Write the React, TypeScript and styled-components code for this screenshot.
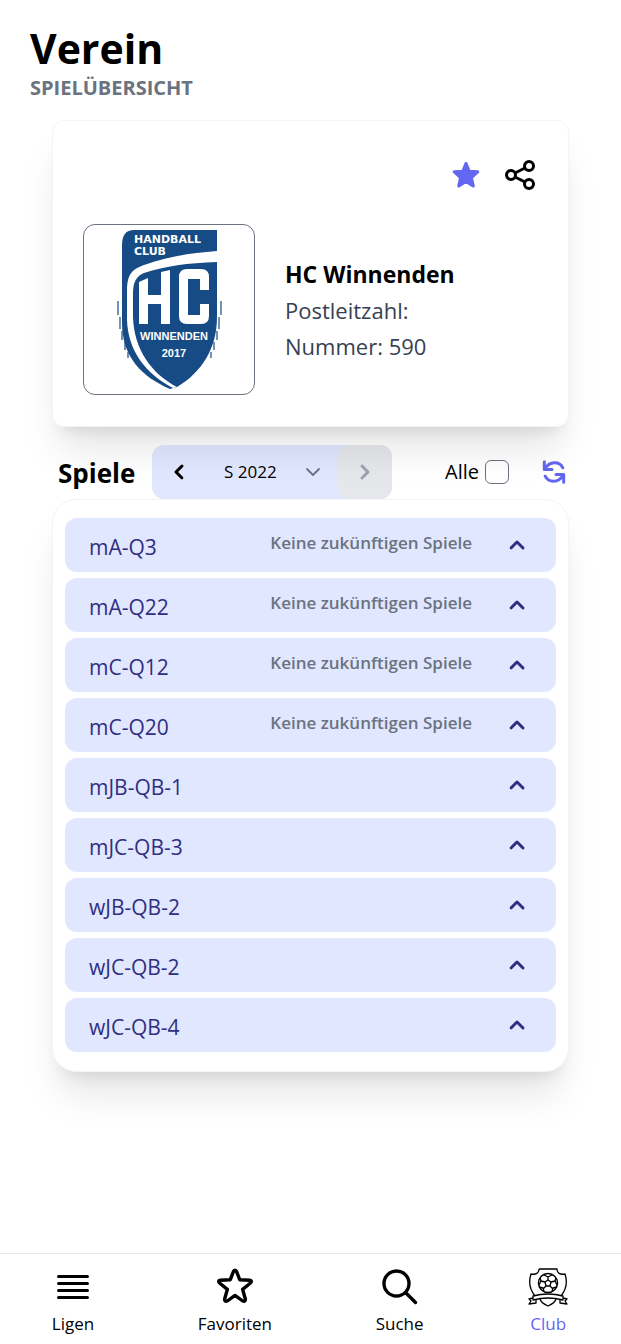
import React, { useState } from "react";
import styled, { createGlobalStyle } from "styled-components";

const Global = createGlobalStyle`
  *, *::before, *::after { box-sizing: border-box; }
  body {
    margin: 0;
    background: #fff;
    color: #000;
    font-family: "Segoe UI", "Open Sans", "Noto Sans", sans-serif;
    font-size: 20px;
    line-height: 30px;
  }
  button, select, input { font: inherit; color: inherit; }
`;

const Page = styled.div`
  display: flex;
  flex-direction: column;
  min-height: 100vh;
`;

const Header = styled.header`
  padding: 24px 30px 0;
`;

const Title = styled.h1`
  margin: 0;
  font-size: 41px;
  line-height: 48px;
  font-weight: 700;
`;

const Subtitle = styled.h2`
  margin: 0;
  font-size: 20px;
  line-height: 32px;
  font-weight: 700;
  text-transform: uppercase;
  color: #6b7280;
`;

const Main = styled.main`
  flex: 1;
  padding: 16px 52px 48px;
`;

const Card = styled.section`
  background: #fff;
  border: 1px solid #f3f4f6;
  box-shadow: 0 30px 38px -8px rgba(0, 0, 0, 0.1), 0 12px 15px -9px rgba(0, 0, 0, 0.1);
`;

const ClubCard = styled(Card)`
  position: relative;
  border-radius: 12px;
  padding: 36px 30px 31px;
`;

const CardActions = styled.div`
  display: flex;
  justify-content: flex-end;
  gap: 18px;
  margin-bottom: 31px;
`;

const IconButton = styled.button<{ $accent?: boolean; $width?: number }>`
  display: flex;
  align-items: center;
  justify-content: center;
  width: ${(p) => p.$width ?? 36}px;
  height: 36px;
  padding: 0;
  border: 0;
  background: none;
  color: ${(p) => (p.$accent ? "#6366f1" : "#000")};
`;

const ClubInfo = styled.div`
  display: flex;
  align-items: center;
  gap: 30px;
`;

const LogoFrame = styled.div`
  width: 172px;
  height: 171px;
  border: 1px solid #6b7280;
  border-radius: 12px;
  overflow: hidden;
`;

const ClubName = styled.h3`
  margin: 0;
  font-size: 23px;
  line-height: 36px;
  font-weight: 700;
`;

const ClubDetail = styled.p`
  margin: 0;
  font-size: 22px;
  line-height: 36px;
  color: #374151;
`;

const Toolbar = styled.div`
  display: flex;
  align-items: center;
  margin-top: 18px;
  padding-left: 6px;
`;

const ToolbarTitle = styled.h3`
  margin: 0;
  width: 94px;
  padding-top: 2px;
  font-size: 26px;
  line-height: 36px;
  font-weight: 700;
`;

const SeasonPicker = styled.div`
  display: flex;
  width: 240px;
  height: 54px;
  border-radius: 12px;
  background: #e0e7ff;
`;

const StepButton = styled.button`
  display: flex;
  align-items: center;
  justify-content: center;
  width: 54px;
  padding: 0;
  border: 0;
  border-radius: 12px;
  background: none;

  &:disabled {
    background: #e5e7eb;
    color: #9ca3af;
  }
`;

const SelectWrap = styled.label`
  display: flex;
  flex: 1;
  align-items: center;
  padding: 0 15px 0 18px;

  svg { pointer-events: none; flex: none; }
`;

const Select = styled.select`
  appearance: none;
  flex: 1;
  min-width: 0;
  padding: 0;
  border: 0;
  background: transparent;
  font-size: 17px;
  line-height: 30px;
`;

const AllToggle = styled.label`
  display: flex;
  align-items: center;
  gap: 6px;
  margin-left: auto;
  margin-right: 30px;
`;

const Checkbox = styled.input`
  appearance: none;
  width: 24px;
  height: 24px;
  margin: 0;
  border: 1px solid #6b7280;
  border-radius: 6px;
  background: #fff;

  &:checked { background: #6366f1; }
`;

const GroupCard = styled(Card)`
  border-radius: 24px;
  padding: 18px 12px 19px;
`;

const GroupList = styled.ul`
  display: flex;
  flex-direction: column;
  gap: 6px;
  margin: 0;
  padding: 0;
  list-style: none;
`;

const GroupRow = styled.button`
  display: flex;
  align-items: center;
  width: 100%;
  height: 54px;
  padding: 0 24px;
  border: 0;
  border-radius: 12px;
  background: #e0e7ff;
  color: #312e81;
  text-align: left;
`;

const GroupName = styled.span`
  flex: 1;
  padding-top: 4px;
  font-size: 21px;
  font-weight: 500;
`;

const GroupNote = styled.span`
  margin-right: 30px;
  padding-bottom: 4px;
  font-size: 17px;
  font-weight: 600;
  color: #6b7280;
`;

const Nav = styled.nav`
  position: sticky;
  bottom: 0;
  display: flex;
  justify-content: space-around;
  padding: 12px 0 8px;
  border-top: 1px solid #e5e7eb;
  background: #fff;
`;

const NavLink = styled.a<{ $active?: boolean }>`
  display: flex;
  flex-direction: column;
  align-items: center;
  gap: 3px;
  color: ${(p) => (p.$active ? "#6366f1" : "#000")};
  font-size: 17px;
  line-height: 25px;
  text-decoration: none;

  svg { color: #000; }
`;

type Direction = "left" | "right" | "up";

const chevronPaths: Record<Direction, string> = {
  left: "M12.7 5.3a1 1 0 010 1.4L9.4 10l3.3 3.3a1 1 0 01-1.4 1.4l-4-4a1 1 0 010-1.4l4-4a1 1 0 011.4 0z",
  right: "M7.3 14.7a1 1 0 010-1.4l3.3-3.3-3.3-3.3a1 1 0 011.4-1.4l4 4a1 1 0 010 1.4l-4 4a1 1 0 01-1.4 0z",
  up: "M14.7 12.7a1 1 0 01-1.4 0L10 9.4l-3.3 3.3a1 1 0 01-1.4-1.4l4-4a1 1 0 011.4 0l4 4a1 1 0 010 1.4z",
};

function Chevron({ direction, size }: { direction: Direction; size: number }) {
  return (
    <svg width={size} height={size} viewBox="0 0 20 20" fill="currentColor" aria-hidden="true">
      <path fillRule="evenodd" d={chevronPaths[direction]} />
    </svg>
  );
}

function SelectArrow() {
  return (
    <svg width="20" height="20" viewBox="0 0 20 20" fill="none" aria-hidden="true">
      <path d="M4 7l6 6 6-6" stroke="#6b7280" strokeWidth="1.800" strokeLinecap="round" strokeLinejoin="round" />
    </svg>
  );
}

function StarSolid() {
  return (
    <svg width="30" height="30" viewBox="0 0 30 30" fill="currentColor" stroke="currentColor" strokeWidth="3.2" strokeLinejoin="round" aria-hidden="true">
      <path d="M15 3.600L18.100 11.300L26.700 11.900L20.300 17.600L22.200 26L15 21.500L7.800 26L9.700 17.600L3.300 11.900L11.900 11.300Z" />
    </svg>
  );
}

function ShareIcon() {
  return (
    <svg width="36" height="36" viewBox="0 0 36 36" fill="none" stroke="currentColor" strokeWidth="3" aria-hidden="true">
      <circle cx="27" cy="9" r="4.500" />
      <circle cx="9" cy="18" r="4.500" />
      <circle cx="27" cy="27" r="4.500" />
      <path d="M13 16L23 11M13 20L23 25" />
    </svg>
  );
}

function RefreshIcon() {
  return (
    <svg width="24" height="26" viewBox="0 0 24 26" fill="none" stroke="currentColor" strokeWidth="3" strokeLinecap="round" strokeLinejoin="round" aria-hidden="true">
      <path d="M2.300 2.800v7.700h7.700M3 9.800C7.500 1.800 17.500 2 20.800 8.800" />
      <path d="M21.700 23.200v-7.700h-7.700M21 16.200C16.500 24.200 6.500 24 3.200 17.200" />
    </svg>
  );
}

function LinesIcon() {
  return (
    <svg width="42" height="42" viewBox="0 0 42 42" stroke="currentColor" strokeWidth="3.2" strokeLinecap="round" aria-hidden="true">
      <path d="M6.600 10.500H35.400M6.600 17.500H35.400M6.600 24.500H35.400M6.600 31.500H35.400" />
    </svg>
  );
}

function StarOutline() {
  return (
    <svg width="42" height="42" viewBox="0 0 42 42" fill="none" stroke="currentColor" strokeWidth="3.4" strokeLinejoin="round" aria-hidden="true">
      <path d="M19.500 5.400Q21 3 22.500 5.400L25.700 13.700L35.800 14.200Q38.400 14.800 36.500 17L28.600 23.300L31.400 33.200Q31.400 36.200 28.700 35L21 29.400L13.300 35Q10.600 36.200 10.600 33.200L13.400 23.300L5.500 17Q3.600 14.800 6.200 14.200L16.300 13.700Z" />
    </svg>
  );
}

function SearchIcon() {
  return (
    <svg width="42" height="42" viewBox="0 0 42 42" fill="none" stroke="currentColor" strokeWidth="3.4" strokeLinecap="round" aria-hidden="true">
      <circle cx="17.500" cy="17.500" r="12.500" />
      <path d="M26.800 26.800L36.500 36.500" />
    </svg>
  );
}

function ClubLogo() {
  return (
    <svg width="170" height="169" viewBox="0 0 170 169" role="img" aria-label="HC Winnenden">
      <path d="M38 52V20Q38 5 50 5H133V92C133 123 118 147 93 162L86 164C58 152 38 132 38 98Z" fill="#164b86" />
      <path d="M133 26V37C103 38 82 41 60 48Q49 52 49 68V92C50 125 68 149 93 162L89 163C62 149 44 126 43 95V68C43 51 46 45 60 40C82 32 106 28 133 26Z" fill="#fff" />
      <path d="M55 57L64 53V70H77V47L86 45V99H77V79H64V99H55Z" fill="#fff" />
      <path d="M103 44H117Q125 44 125 52V65H116V54H104V90H116V79H125V91Q125 99 117 99H103Q95 99 95 91V52Q95 44 103 44Z" fill="#fff" />
      <path d="M34 76V90M36 92V104M38 106V115M41 117V125M44 127V133M137 76V90M135 92V104M133 106V115M130 117V125M127 127V133" stroke="#164b86" strokeWidth="1.200" />
      <g fill="#fff" fontFamily="Liberation Sans, Arial, sans-serif" fontWeight="700">
        <g fontFamily="DejaVu Sans, Verdana, sans-serif">
          <text x="50" y="18" fontSize="11">HANDBALL</text>
          <text x="50" y="30" fontSize="11">CLUB</text>
        </g>
        <text x="90" y="115" fontSize="11" textAnchor="middle">WINNENDEN</text>
        <text x="90" y="132" fontSize="11" textAnchor="middle">2017</text>
      </g>
    </svg>
  );
}

function ClubCrest() {
  return (
    <svg width="42" height="42" viewBox="0 0 42 42" fill="none" stroke="currentColor" strokeWidth="1.3" strokeLinejoin="round" aria-hidden="true">
      <path d="M12 3H30C30 7 33 9 38 8C41 17 38 25 34 30M8 30C4 25 1 17 4 8C9 9 12 7 12 3" />
      <path d="M6 30Q21 26 36 30V34Q21 30 6 34Z" />
      <path d="M6 32L2 33L4 35L2 38L9 37V34M36 32L40 33L38 35L40 38L33 37V34" />
      <path d="M13 33Q14 37 21 40Q28 37 29 33" />
      <circle cx="21" cy="17" r="9.500" strokeWidth="1.500" />
      <path d="M21 14L24 16L23 20H19L18 16ZM21 14V10M24 16L28 15M23 20L26 23M19 20L16 23M18 16L14 15M17 9L21 11L25 9M29 12L28 15L30 19M25 25L26 22L30 21M17 25L16 22L12 21M13 12L14 15L12 19" />
    </svg>
  );
}

const groups = [
  { name: "mA-Q3", empty: true },
  { name: "mA-Q22", empty: true },
  { name: "mC-Q12", empty: true },
  { name: "mC-Q20", empty: true },
  { name: "mJB-QB-1", empty: false },
  { name: "mJC-QB-3", empty: false },
  { name: "wJB-QB-2", empty: false },
  { name: "wJC-QB-2", empty: false },
  { name: "wJC-QB-4", empty: false },
];

export default function App() {
  const [showAll, setShowAll] = useState(false);

  return (
    <Page>
      <Global />
      <Header>
        <Title>Verein</Title>
        <Subtitle>Spielübersicht</Subtitle>
      </Header>
      <Main>
        <ClubCard>
          <CardActions>
            <IconButton $accent aria-label="Favorit">
              <StarSolid />
            </IconButton>
            <IconButton aria-label="Teilen">
              <ShareIcon />
            </IconButton>
          </CardActions>
          <ClubInfo>
            <LogoFrame>
              <ClubLogo />
            </LogoFrame>
            <div>
              <ClubName>HC Winnenden</ClubName>
              <ClubDetail>Postleitzahl:</ClubDetail>
              <ClubDetail>Nummer: 590</ClubDetail>
            </div>
          </ClubInfo>
        </ClubCard>
        <Toolbar>
          <ToolbarTitle>Spiele</ToolbarTitle>
          <SeasonPicker>
            <StepButton aria-label="Vorherige Saison">
              <Chevron direction="left" size={30} />
            </StepButton>
            <SelectWrap>
              <Select aria-label="Saison">
                <option>S 2022</option>
              </Select>
              <SelectArrow />
            </SelectWrap>
            <StepButton disabled aria-label="Nächste Saison">
              <Chevron direction="right" size={30} />
            </StepButton>
          </SeasonPicker>
          <AllToggle>
            Alle
            <Checkbox type="checkbox" checked={showAll} onChange={() => setShowAll(!showAll)} />
          </AllToggle>
          <IconButton $accent $width={30} aria-label="Aktualisieren">
            <RefreshIcon />
          </IconButton>
        </Toolbar>
        <GroupCard>
          <GroupList>
            {groups.map((group) => (
              <li key={group.name}>
                <GroupRow>
                  <GroupName>{group.name}</GroupName>
                  {group.empty && <GroupNote>Keine zukünftigen Spiele</GroupNote>}
                  <Chevron direction="up" size={30} />
                </GroupRow>
              </li>
            ))}
          </GroupList>
        </GroupCard>
      </Main>
      <Nav>
        <NavLink href="#ligen">
          <LinesIcon />
          Ligen
        </NavLink>
        <NavLink href="#favoriten">
          <StarOutline />
          Favoriten
        </NavLink>
        <NavLink href="#suche">
          <SearchIcon />
          Suche
        </NavLink>
        <NavLink href="#club" $active>
          <ClubCrest />
          Club
        </NavLink>
      </Nav>
    </Page>
  );
}
